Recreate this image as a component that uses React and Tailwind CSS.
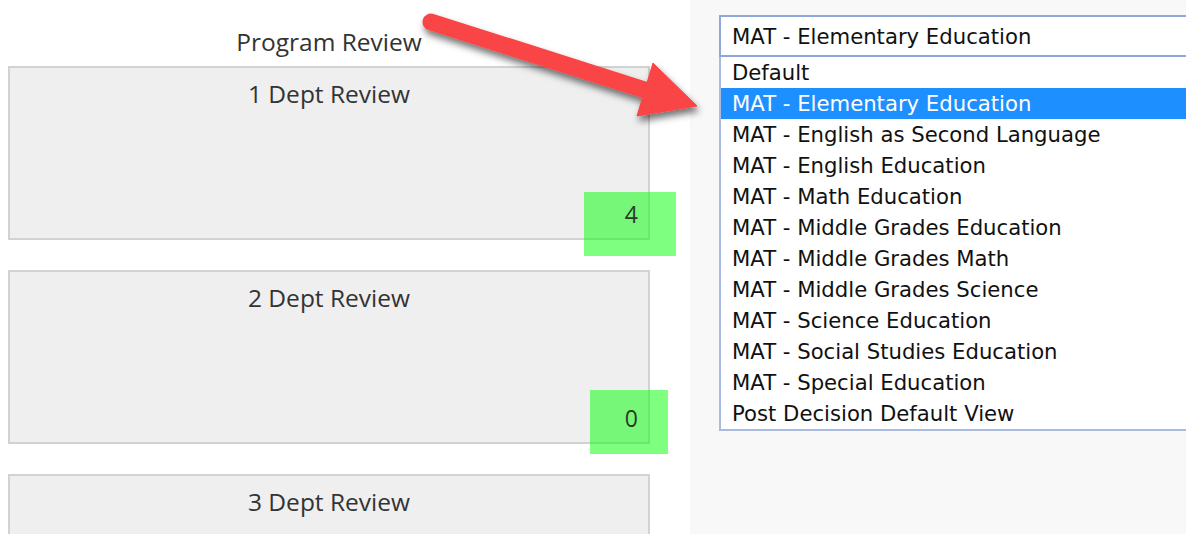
import React from "react";

const programs = [
  "Default",
  "MAT - Elementary Education",
  "MAT - English as Second Language",
  "MAT - English Education",
  "MAT - Math Education",
  "MAT - Middle Grades Education",
  "MAT - Middle Grades Math",
  "MAT - Middle Grades Science",
  "MAT - Science Education",
  "MAT - Social Studies Education",
  "MAT - Special Education",
  "Post Decision Default View",
];

function ReviewBox({ title, count, mark }) {
  return (
    <div className="relative h-[174px] w-[642px] shrink-0 border-2 border-[#d2d2d2] bg-[#efefef]">
      <div className="pt-[11px] text-center text-[24.5px] leading-[30px] text-[#333]">{title}</div>
      {mark && <div className={`absolute h-[64px] bg-[#00ff00]/50 ${mark}`} />}
      {count !== undefined && (
        <div className="absolute right-[10px] top-[131px] text-[23px] leading-[30px] text-[#2a3a2a]">{count}</div>
      )}
    </div>
  );
}

function Arrow() {
  return (
    <svg
      className="pointer-events-none absolute left-0 top-0"
      width="1186"
      height="534"
      viewBox="0 0 1186 534"
    >
      <defs>
        <filter id="arrowShadow" x="-10%" y="-30%" width="130%" height="180%">
          <feDropShadow dx="2" dy="5" stdDeviation="3.5" floodColor="#000" floodOpacity="0.55" />
        </filter>
      </defs>
      <g filter="url(#arrowShadow)" fill="#f94444" stroke="#f94444">
        <line x1="431" y1="22" x2="648" y2="91" strokeWidth="17" strokeLinecap="round" />
        <polygon points="637,116 653,63 697,106" strokeWidth="1" strokeLinejoin="round" />
      </g>
    </svg>
  );
}

export default function App() {
  return (
    <div className="relative flex h-[534px] w-[1186px] overflow-hidden bg-white [font-family:'Open_Sans',sans-serif]">
      {/* queue column */}
      <div className="flex w-[690px] shrink-0 flex-col pl-[8px] pt-[27px]">
        <div className="w-[642px] text-center text-[24.5px] leading-[30px] text-[#333]">Program Review</div>
        <div className="mt-[9px] flex flex-col gap-[30px]">
          <ReviewBox title="1 Dept Review" count={4} mark="left-[574px] top-[124px] w-[92px]" />
          <ReviewBox title="2 Dept Review" count={0} mark="left-[580px] top-[118px] w-[78px]" />
          <ReviewBox title="3 Dept Review" />
        </div>
      </div>

      {/* view picker */}
      <div className="flex-1 bg-[#f8f8f8] pl-[29px] pt-[15px] text-[#111] [font-family:'DejaVu_Sans',sans-serif]">
        <div className="flex h-[42px] w-[520px] items-center border-2 border-[#8fa7d9] bg-white pl-[11px] pt-[2px] text-[21.2px]">
          MAT - Elementary Education
        </div>
        <div className="w-[520px] border-x-2 border-b-2 border-[#a9bbe0] bg-white">
          {programs.map((p, i) => (
            <div
              key={p}
              className={`flex h-[31px] items-center pl-[11px] text-[21.2px] ${
                i === 1 ? "bg-[#1e8fff] text-white" : ""
              }`}
            >
              {p}
            </div>
          ))}
        </div>
      </div>

      <Arrow />
    </div>
  );
}
